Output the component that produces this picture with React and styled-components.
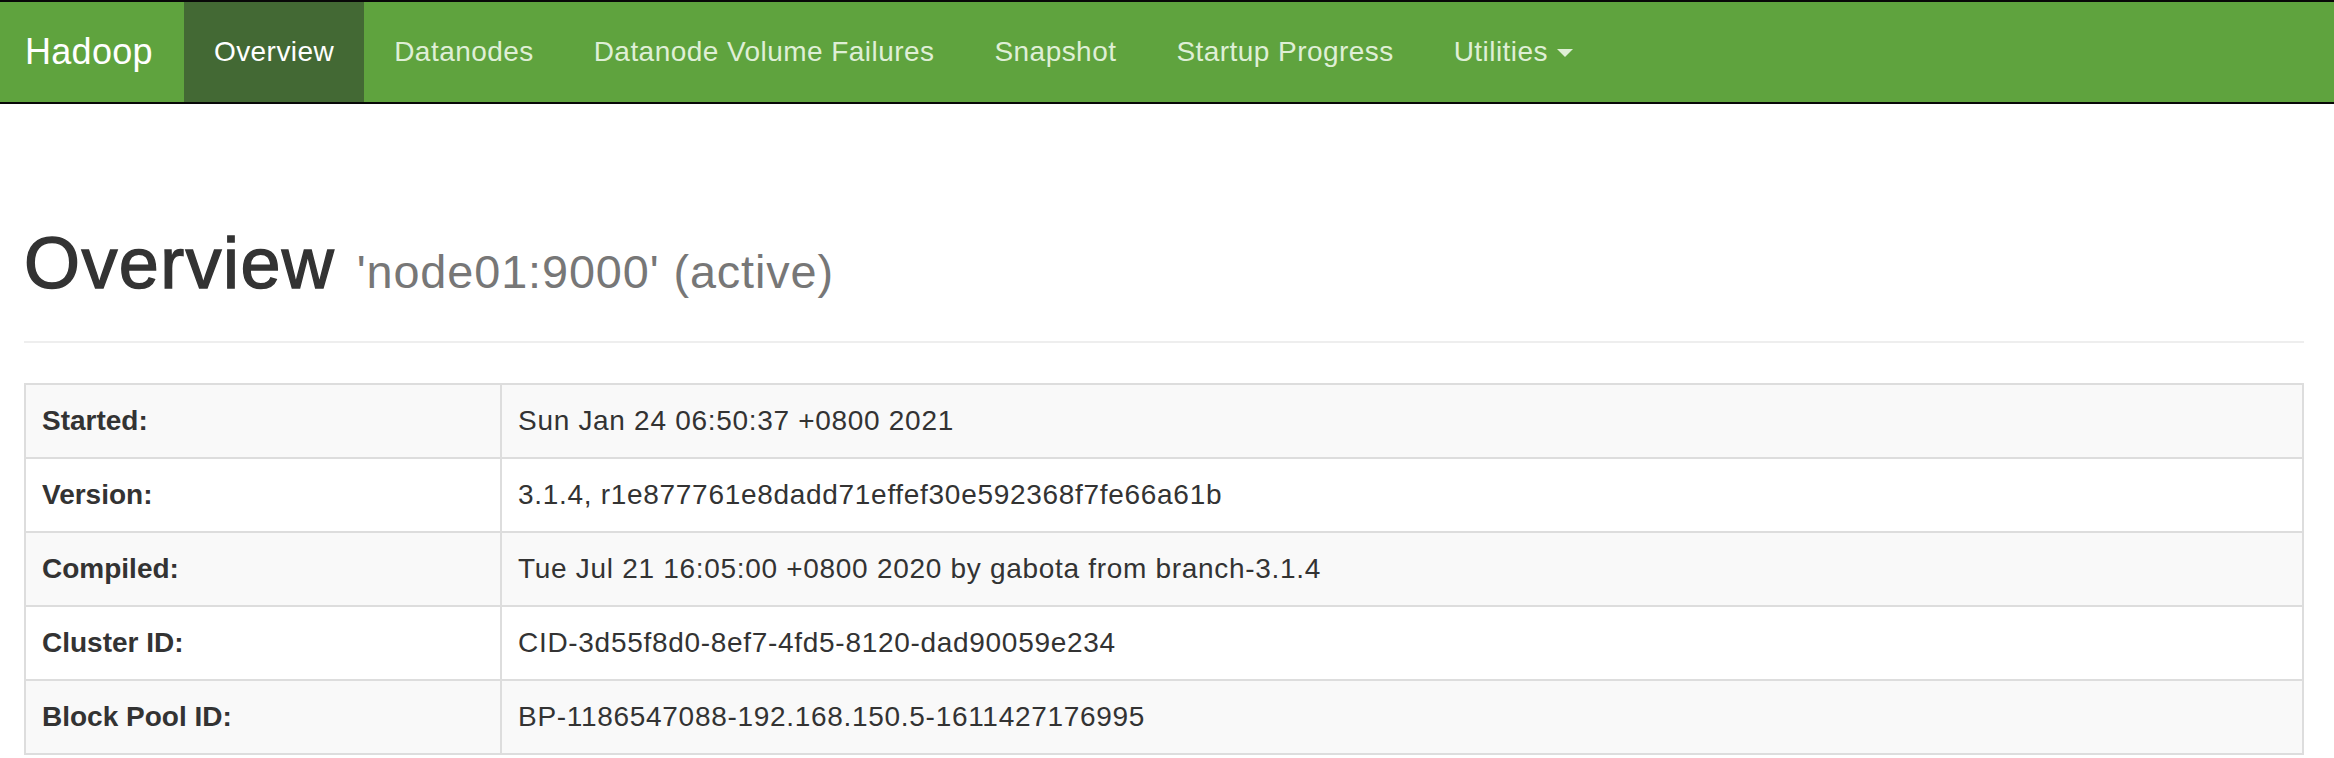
import React from "react";
import styled, { createGlobalStyle } from "styled-components";

const GlobalStyle = createGlobalStyle`
  html, body {
    margin: 0;
    padding: 0;
    background: #fff;
  }
  body {
    font-family: "Liberation Sans", Arial, "Noto Sans CJK SC", sans-serif;
    font-size: 28px;
    line-height: 40px;
    letter-spacing: 0.45px;
    color: #333;
  }
  * {
    box-sizing: border-box;
  }
`;

const Navbar = styled.nav`
  display: flex;
  align-items: stretch;
  height: 104px;
  background-color: #5fa33e;
  border-top: 2px solid #080808;
  border-bottom: 2px solid #080808;
`;

const Brand = styled.a`
  padding: 30px 31px 30px 25px;
  font-size: 36px;
  line-height: 40px;
  letter-spacing: 0.3px;
  color: #fff;
  text-decoration: none;
`;

const NavList = styled.ul`
  display: flex;
  margin: 0;
  padding: 0;
  list-style: none;
`;

const NavItem = styled.li`
  display: flex;
`;

const NavLink = styled.a`
  display: flex;
  align-items: center;
  padding: 30px 30px;
  line-height: 40px;
  text-decoration: none;
  color: ${({ $active }) => ($active ? "#fff" : "#dfefd6")};
  background-color: ${({ $active }) => ($active ? "#436934" : "transparent")};
`;

const Caret = styled.span`
  display: inline-block;
  width: 0;
  height: 0;
  margin-left: 9px;
  margin-top: 2px;
  border-top: 8px solid currentColor;
  border-left: 8px solid transparent;
  border-right: 8px solid transparent;
`;

const Container = styled.main`
  padding: 0 30px 0 24px;
`;

const PageHeader = styled.div`
  margin-top: 120px;
  margin-bottom: 40px;
  padding-bottom: 18px;
  border-bottom: 2px solid #eee;
`;

const Title = styled.h1`
  margin: 0 0 20px;
  font-size: 72px;
  line-height: 1.1;
  font-weight: 500;
  letter-spacing: 1.4px;
  color: #333;
  -webkit-text-stroke: 1.4px #333;
`;

const Small = styled.small`
  font-size: 65%;
  font-weight: 400;
  line-height: 1;
  letter-spacing: 0.9px;
  color: #777;
  -webkit-text-stroke: 0;
`;

const InfoTable = styled.table`
  width: 100%;
  border-collapse: collapse;
  border-spacing: 0;
  border: 2px solid #ddd;
`;

const Row = styled.tr`
  &:nth-child(odd) {
    background-color: #f9f9f9;
  }
`;

const Th = styled.th`
  width: 476px;
  padding: 16px;
  text-align: left;
  font-weight: bold;
  line-height: 40px;
  letter-spacing: 0;
  border: 2px solid #ddd;
`;

const Td = styled.td`
  padding: 16px;
  line-height: 40px;
  letter-spacing: 0.7px;
  border: 2px solid #ddd;
`;

const links = [
  "Overview",
  "Datanodes",
  "Datanode Volume Failures",
  "Snapshot",
  "Startup Progress",
];

const rows = [
  ["Started:", "Sun Jan 24 06:50:37 +0800 2021"],
  ["Version:", "3.1.4, r1e877761e8dadd71effef30e592368f7fe66a61b"],
  ["Compiled:", "Tue Jul 21 16:05:00 +0800 2020 by gabota from branch-3.1.4"],
  ["Cluster ID:", "CID-3d55f8d0-8ef7-4fd5-8120-dad90059e234"],
  ["Block Pool ID:", "BP-1186547088-192.168.150.5-1611427176995"],
];

export default function App() {
  return (
    <>
      <GlobalStyle />
      <Navbar>
        <Brand href="#">Hadoop</Brand>
        <NavList>
          {links.map((label, i) => (
            <NavItem key={label}>
              <NavLink href="#" $active={i === 0}>
                {label}
              </NavLink>
            </NavItem>
          ))}
          <NavItem>
            <NavLink href="#">
              Utilities
              <Caret />
            </NavLink>
          </NavItem>
        </NavList>
      </Navbar>

      <Container>
        <PageHeader>
          <Title>
            Overview <Small>'node01:9000' (active)</Small>
          </Title>
        </PageHeader>

        <InfoTable>
          <tbody>
            {rows.map(([label, value]) => (
              <Row key={label}>
                <Th>{label}</Th>
                <Td>{value}</Td>
              </Row>
            ))}
          </tbody>
        </InfoTable>
      </Container>
    </>
  );
}
